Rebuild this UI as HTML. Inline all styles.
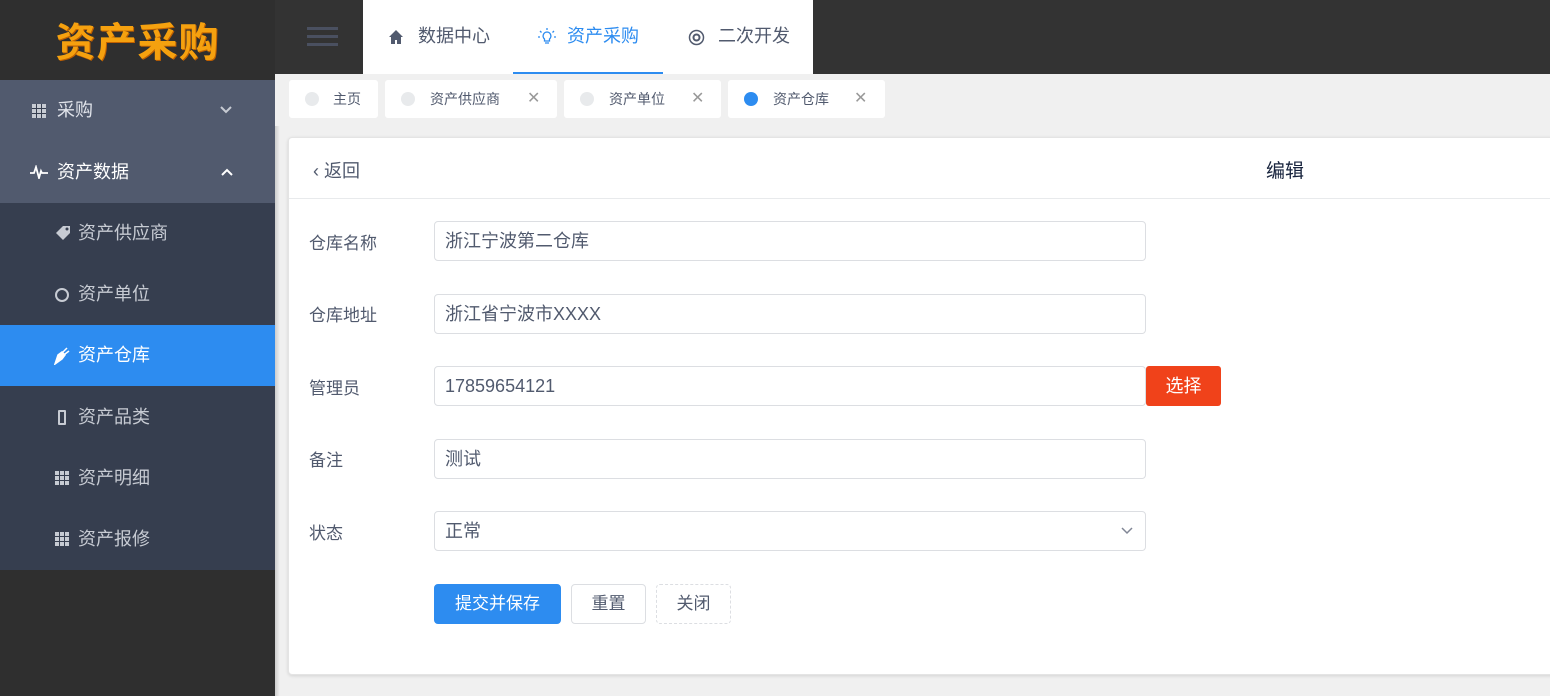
<!DOCTYPE html>
<html><head><meta charset="utf-8"><style>
*{margin:0;padding:0;box-sizing:border-box}
body{width:1550px;height:696px;overflow:hidden;background:#f0f0f0;font-family:"Liberation Sans","Noto Sans CJK SC",sans-serif;position:relative;color:#515a6e}
.a{position:absolute}
.side{left:0;top:0;width:275px;height:696px;background:#2f2f2f}
.logo{left:0;top:0;width:275px;height:80px;text-align:center;line-height:78px;font-size:40px;font-weight:bold;color:#f5a10f;font-family:"WenQuanYi Zen Hei","Noto Sans CJK SC",sans-serif;letter-spacing:1px;text-shadow:1px 1px 0 #c06000}
.m1{top:80px;left:0;width:275px;height:123px;background:#515a6e}
.mi{left:0;width:275px;height:61px;line-height:61px;font-size:18px;color:#e0e3ea}
.sub{top:203px;left:0;width:275px;height:367px;background:#363e4f}
.si{left:0;width:275px;height:61px;line-height:61px;font-size:18px;color:#c7cbd3;padding-left:78px}
.si i{position:absolute;left:55px;top:23px;width:14px;height:14px}
.grid{background:
linear-gradient(#363e4f,#363e4f) 4px 0/1px 14px no-repeat,linear-gradient(#363e4f,#363e4f) 9px 0/1px 14px no-repeat,
linear-gradient(#363e4f,#363e4f) 0 4px/14px 1px no-repeat,linear-gradient(#363e4f,#363e4f) 0 9px/14px 1px no-repeat,#c7cbd3}
.hdr{left:275px;top:0;width:1275px;height:74px;background:#333}
.tabs{left:363px;top:0;width:450px;height:74px;background:#fff}
.t{top:0;height:74px;line-height:72px;font-size:18px;color:#515a6e}
.tb{top:74px;left:275px;width:1275px;height:52px;background:#f0f0f0}
.tag{top:80px;height:38px;background:#fff;border-radius:3px;font-size:14px;line-height:38px;color:#515a6e}
.tag .d{position:absolute;left:16px;top:12px;width:14px;height:14px;border-radius:50%;background:#e8eaec}
.tag .x{position:absolute;top:0;font-size:16px;color:#999}
.card{left:288px;top:137px;width:1270px;height:538px;background:#fff;border:1px solid #e4e4e4;border-radius:4px;box-shadow:0 1px 3px rgba(0,0,0,.12)}
.lbl{left:309px;font-size:17px;color:#515a6e}
.inp{left:434px;width:712px;height:40px;border:1px solid #dcdee2;border-radius:4px;font-size:18px;line-height:38px;padding-left:10px;color:#515a6e;background:#fff}
.btn{top:584px;height:40px;border-radius:4px;font-size:17px;line-height:38px;text-align:center}
</style></head><body>
<div class="a side"></div>
<div class="a logo">资产采购</div>
<div class="a m1"></div>
<div class="a mi" style="top:80px"><span class="a grid" style="left:32px;top:24px;width:14px;height:14px;background-color:#c7cbd3"></span><span class="a" style="left:57px">采购</span></div>
<div class="a mi" style="top:142px;color:#fff"><svg class="a" style="left:30px;top:23px" width="18" height="14" viewBox="0 0 18 14"><path d="M0 8h4l2-6 3 11 2-7 1 2h6" fill="none" stroke="#fff" stroke-width="1.8"/></svg><span class="a" style="left:57px">资产数据</span><svg class="a" style="left:221px;top:26px" width="12" height="8"><path d="M1 7l5-5 5 5" fill="none" stroke="#fff" stroke-width="2"/></svg></div>
<svg class="a" style="left:220px;top:106px" width="12" height="8"><path d="M1 1l5 5 5-5" fill="none" stroke="#c7cbd3" stroke-width="2"/></svg>
<div class="a sub"></div>
<div class="a si" style="top:203px"><svg class="a" style="left:54px;top:22px" width="18" height="18"><path d="M2 8l7-7h7v7l-7 7z" fill="#c7cbd3"/><circle cx="13" cy="4" r="1.5" fill="#363e4f"/></svg>资产供应商</div>
<div class="a si" style="top:264px"><svg class="a" style="left:54px;top:23px" width="16" height="16"><circle cx="8" cy="8" r="6" fill="none" stroke="#c7cbd3" stroke-width="2"/></svg>资产单位</div>
<div class="a si" style="top:325px;background:#2d8cf0;color:#fff"><svg class="a" style="left:54px;top:22px" width="16" height="18"><path d="M1 17l3-9 4-3 3 3-3 4z M9 5l4-4M11 7l4-3" fill="#fff" stroke="#fff" stroke-width="1.5"/></svg>资产仓库</div>
<div class="a si" style="top:387px"><div class="a" style="left:58px;top:23px;width:8px;height:15px;border:2px solid #c7cbd3;border-radius:1px"></div>资产品类</div>
<div class="a si" style="top:448px"><i class="grid"></i>资产明细</div>
<div class="a si" style="top:509px"><i class="grid"></i>资产报修</div>
<div class="a" style="left:275px;top:0;width:5px;height:696px;background:linear-gradient(90deg,rgba(0,0,0,.15),rgba(0,0,0,0))"></div>
<div class="a hdr"></div>
<div class="a" style="left:307px;top:27px;width:31px;height:3px;background:#4a5060;box-shadow:0 8px 0 #4a5060,0 16px 0 #4a5060"></div>
<div class="a tabs"></div>
<div class="a t" style="left:388px"><svg class="a" style="left:0;top:29px" width="16" height="16"><path d="M8 1L1 8h2v7h4v-4h2v4h4V8h2z" fill="#515a6e"/></svg><span style="margin-left:30px">数据中心</span></div>
<div class="a t" style="left:513px;width:150px;color:#2d8cf0;border-bottom:2px solid #2d8cf0"><svg class="a" style="left:25px;top:28px" width="18" height="18"><path d="M9 4a4 4 0 0 0-2.5 7v2h5v-2A4 4 0 0 0 9 4zM7 15h4M9 0v2M2 3l1.5 1.5M16 3l-1.5 1.5M0 9h2M16 9h2" fill="none" stroke="#2d8cf0" stroke-width="1.3"/></svg><span style="margin-left:54px">资产采购</span></div>
<div class="a t" style="left:688px"><svg class="a" style="left:0;top:29px" width="17" height="17"><circle cx="8.5" cy="8.5" r="7" fill="none" stroke="#515a6e" stroke-width="1.5"/><circle cx="8.5" cy="8.5" r="3" fill="none" stroke="#515a6e" stroke-width="2"/></svg><span style="margin-left:30px">二次开发</span></div>
<div class="a tb"></div>
<div class="a tag" style="left:289px;width:89px"><span class="d"></span><span style="margin-left:44px">主页</span></div>
<div class="a tag" style="left:385px;width:172px"><span class="d"></span><span style="margin-left:45px">资产供应商</span><span class="x" style="left:142px">✕</span></div>
<div class="a tag" style="left:564px;width:157px"><span class="d"></span><span style="margin-left:45px">资产单位</span><span class="x" style="left:127px">✕</span></div>
<div class="a tag" style="left:728px;width:157px"><span class="d" style="background:#2d8cf0"></span><span style="margin-left:45px">资产仓库</span><span class="x" style="left:126px">✕</span></div>
<div class="a card"></div>
<div class="a" style="left:289px;top:198px;width:1261px;height:1px;background:#e8eaec"></div>
<div class="a" style="left:313px;top:157px;font-size:18px;color:#515a6e">‹ 返回</div>
<div class="a" style="left:1266px;top:156px;font-size:19px;color:#17233d">编辑</div>
<div class="a lbl" style="top:229px">仓库名称</div><div class="a inp" style="top:221px">浙江宁波第二仓库</div>
<div class="a lbl" style="top:301px">仓库地址</div><div class="a inp" style="top:294px">浙江省宁波市XXXX</div>
<div class="a lbl" style="top:374px">管理员</div><div class="a inp" style="top:366px">17859654121</div>
<div class="a" style="left:1146px;top:366px;width:75px;height:40px;background:#f0421a;color:#fff;border-radius:3px;font-size:18px;line-height:40px;text-align:center">选择</div>
<div class="a lbl" style="top:446px">备注</div><div class="a inp" style="top:439px">测试</div>
<div class="a lbl" style="top:519px">状态</div><div class="a inp" style="top:511px">正常<svg class="a" style="right:12px;top:15px" width="12" height="8"><path d="M1 1l5 5 5-5" fill="none" stroke="#808695" stroke-width="1.5"/></svg></div>
<div class="a btn" style="left:434px;width:127px;background:#2d8cf0;color:#fff;border:1px solid #2d8cf0">提交并保存</div>
<div class="a btn" style="left:571px;width:75px;border:1px solid #dcdee2;background:#fff">重置</div>
<div class="a btn" style="left:656px;width:75px;border:1px dashed #dcdee2;background:#fff">关闭</div>
</body></html>
